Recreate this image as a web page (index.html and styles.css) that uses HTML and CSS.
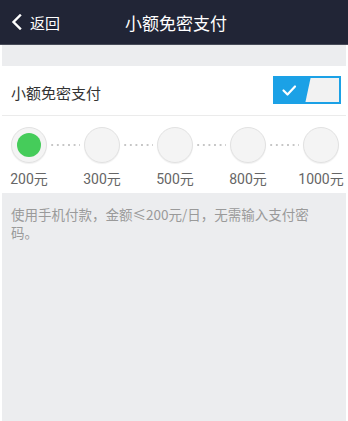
FILE: index.html
```html
<!DOCTYPE html>
<html lang="zh">
<head>
<meta charset="utf-8">
<link rel="stylesheet" href="styles.css">
</head>
<body>
<header class="topbar">
  <div class="back">
    <svg class="chev" width="12" height="16" viewBox="0 0 12 16"><path d="M9 1.5 L2.5 8 L9 14.5" fill="none" stroke="#fff" stroke-width="2.4" stroke-linecap="square"/></svg>
    <span>返回</span>
  </div>
  <div class="title">小额免密支付</div>
</header>
<main class="main">
  <div class="gap"></div>
  <section class="card">
    <div class="row">
      <span class="row-label">小额免密支付</span>
      <div class="toggle">
        <svg width="68" height="28" viewBox="0 0 68 28">
          <rect x="1" y="1" width="66" height="26" fill="#f2f2f2" stroke="#1ba1e6" stroke-width="2"/>
          <polygon points="0,0 38,0 32,28 0,28" fill="#1ba1e6"/>
          <path d="M10.5 14.5 L14.5 18.5 L22 10.5" fill="none" stroke="#fff" stroke-width="2.2" stroke-linecap="round" stroke-linejoin="round"/>
        </svg>
      </div>
    </div>
    <div class="steps">
      <div class="step"><div class="circle"><div class="dot-on"></div></div><span class="amt">200元</span></div>
      <div class="link"></div>
      <div class="step"><div class="circle"></div><span class="amt">300元</span></div>
      <div class="link"></div>
      <div class="step"><div class="circle"></div><span class="amt">500元</span></div>
      <div class="link"></div>
      <div class="step"><div class="circle"></div><span class="amt">800元</span></div>
      <div class="link"></div>
      <div class="step"><div class="circle"></div><span class="amt">1000元</span></div>
    </div>
  </section>
  <p class="desc">使用手机付款，金额≤200元/日，无需输入支付密码。</p>
</main>
</body>
</html>
```
FILE: styles.css
```css
html, body {
  margin: 0;
  padding: 0;
  background: #ffffff;
  height: 100%;
}
body {
  font-family: "Noto Sans CJK SC", "Roboto", sans-serif;
  display: flex;
  flex-direction: column;
}
.topbar {
  height: 44px;
  background: #212536;
  border-bottom: 1px solid #474b58;
  display: flex;
  align-items: center;
  position: relative;
  color: #ffffff;
}
.back {
  display: flex;
  align-items: center;
  padding-left: 11px;
  font-size: 15px;
  gap: 7px;
}
.chev { display: block; }
.title {
  position: absolute;
  left: 0;
  right: 0;
  top: 0;
  bottom: 0;
  display: flex;
  align-items: center;
  justify-content: center;
  font-size: 17px;
  padding-left: 4px;
  pointer-events: none;
}
.main {
  flex: 1;
  margin: 0 2px;
  background: #ecedef;
  display: flex;
  flex-direction: column;
}
.gap { height: 21px; }
.card {
  background: #ffffff;
}
.row {
  height: 49px;
  border-bottom: 1px solid #ebebeb;
  display: flex;
  align-items: center;
  justify-content: space-between;
  padding: 0 5px 0 9px;
}
.row-label {
  font-size: 15px;
  color: #333333;
  padding-top: 3px;
}
.toggle {
  width: 68px;
  height: 28px;
  margin-top: -2px;
}
.toggle svg { display: block; }
.steps {
  display: flex;
  align-items: flex-start;
  padding: 11px 0 5px 9px;
}
.step {
  width: 36px;
  display: flex;
  flex-direction: column;
  align-items: center;
}
.circle {
  width: 34px;
  height: 34px;
  border-radius: 50%;
  background: #f4f4f4;
  border: 1px solid #e2e2e2;
  box-shadow: 0 1px 1px rgba(0,0,0,0.06);
  display: flex;
  align-items: center;
  justify-content: center;
}
.dot-on {
  width: 24px;
  height: 24px;
  border-radius: 50%;
  background: #45cc5a;
}
.amt {
  white-space: nowrap;
  font-size: 14px;
  line-height: 18px;
  margin-top: 7px;
  color: #666666;
  font-family: "Roboto", "Noto Sans CJK SC", sans-serif;
}
.link {
  width: 37px;
  height: 4px;
  margin-top: 16px;
  background-image: radial-gradient(circle, #c6c6c6 0.9px, transparent 1.3px);
  background-size: 5.6px 4px;
  background-repeat: repeat-x;
  background-position: 4px 0;
  background-origin: content-box;
  padding: 0 4px;
  box-sizing: border-box;
  background-clip: content-box;
}
.desc {
  margin: 0;
  padding: 12px 36px 0 9px;
  font-size: 13.5px;
  line-height: 18px;
  color: #9a9a9a;
}
```
